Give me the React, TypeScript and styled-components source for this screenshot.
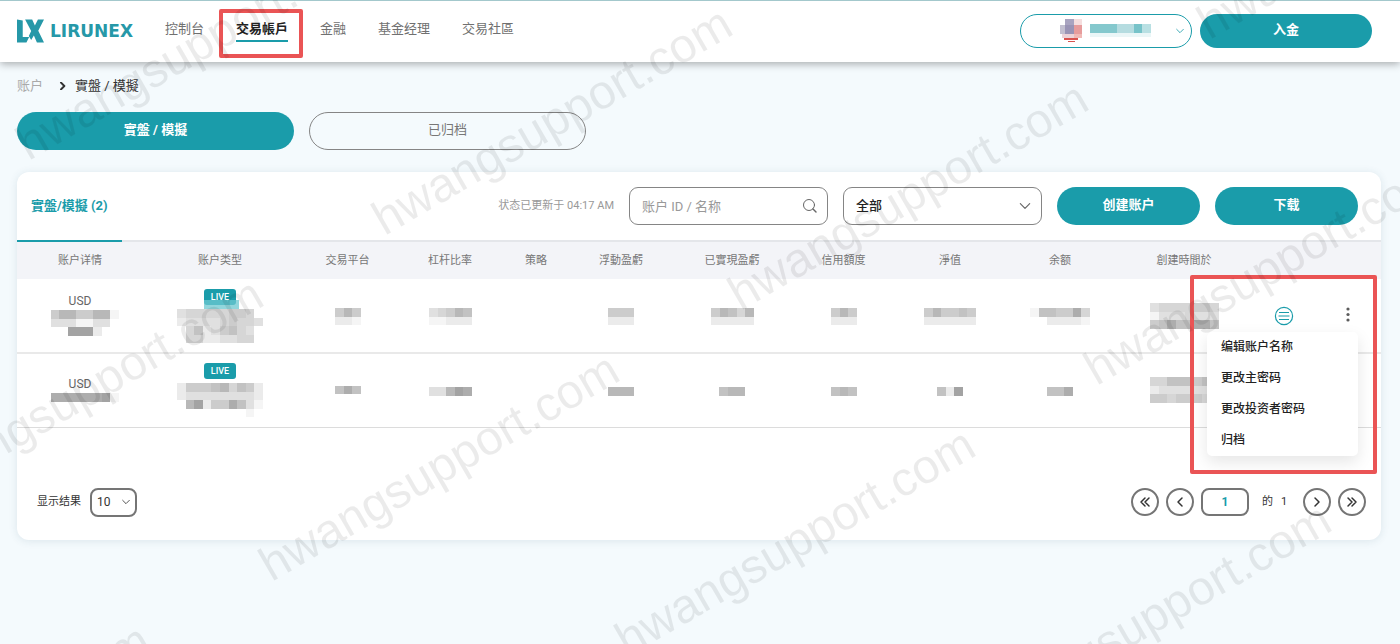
import React from "react";
import styled, { createGlobalStyle, css } from "styled-components";

const teal = "#1a9caa";
const grey = "#757575";
const alertRed = "#ea5455";

const GlobalStyle = createGlobalStyle`
  * { box-sizing: border-box; }
  body {
    margin: 0;
    background: #f4fafd;
    color: #333;
    font-family: Roboto, "Noto Sans CJK SC", sans-serif;
    font-size: 13px;
    line-height: 18px;
  }
  button, input, select { font: inherit; color: inherit; margin: 0; }
  button { cursor: pointer; }
`;

const Page = styled.div`
  position: relative;
  min-height: 100vh;
  overflow: hidden;
`;

const Header = styled.header`
  display: flex;
  align-items: center;
  height: 62px;
  padding: 0 28px 2px 17px;
  border-top: 1px solid #a3c8cc;
  background: #fff;
  box-shadow: 0 2px 8px rgba(0, 0, 0, 0.32);
`;

const Logo = styled.a`
  display: flex;
  align-items: center;
  gap: 6px;
  width: 148px;
  color: #2698a8;
  font: bold 17px/24px "DejaVu Sans", sans-serif;
  text-decoration: none;
`;

const Nav = styled.nav`
  display: flex;
  flex: 1;
  gap: 32px;
`;

const NavLink = styled.a<{ $active?: boolean }>`
  position: relative;
  height: 23px;
  padding-top: 1px;
  color: ${(p) => (p.$active ? "#222" : "#707070")};
  font-weight: ${(p) => (p.$active ? 700 : 400)};
  border-bottom: 2px solid ${(p) => (p.$active ? teal : "transparent")};
  text-decoration: none;
`;

const Highlight = styled.span`
  position: absolute;
  z-index: 3;
  border: 4px solid ${alertRed};
  border-radius: 2px;
  pointer-events: none;
`;

const NavHighlight = styled(Highlight)`
  inset: -10px -15px -18px -17px;
`;

const MenuHighlight = styled(Highlight)`
  top: -25px;
  right: -19px;
  width: 187px;
  height: 199px;
`;

const HeaderActions = styled.div`
  display: flex;
  gap: 8px;
`;

const PillButton = styled.button<{ $width: number; $height: number; $outline?: string }>`
  display: flex;
  align-items: center;
  justify-content: center;
  width: ${(p) => p.$width}px;
  height: ${(p) => p.$height}px;
  padding: 0 0 2px;
  border: ${(p) => (p.$outline ? `1px solid ${p.$outline}` : "0")};
  border-radius: 19px;
  background: ${(p) => (p.$outline ? "transparent" : teal)};
  color: ${(p) => (p.$outline ? "#777" : "#fff")};
  font-weight: ${(p) => (p.$outline ? 400 : 700)};
`;

const AccountButton = styled(PillButton)`
  justify-content: flex-end;
  gap: 8px;
  padding: 0 6px 0 0;
  color: ${teal};
  svg:last-child { margin-left: 16px; }
`;

const Main = styled.main`
  padding: 15px 19px 24px 17px;
`;

const Breadcrumb = styled.nav`
  display: flex;
  align-items: center;
  height: 18px;
  margin-bottom: 17px;
  a { color: #aaa; text-decoration: none; }
  svg { margin: 0 8px 0 16px; }
`;

const ViewTabs = styled.div`
  display: flex;
  gap: 15px;
  margin-bottom: 22px;
`;

const Card = styled.section`
  border-radius: 12px;
  background: #fff;
  box-shadow: 0 1px 8px rgba(40, 80, 110, 0.12);
`;

const Toolbar = styled.div`
  display: flex;
  align-items: center;
  gap: 15px;
  height: 70px;
  padding-right: 23px;
  border-bottom: 2px solid #e4e6ea;
`;

const ListTab = styled.h2`
  align-self: stretch;
  display: flex;
  align-items: center;
  width: 105px;
  margin: 0 auto -2px 0;
  padding-left: 14px;
  border-bottom: 2px solid ${teal};
  color: ${teal};
  font-size: 13px;
  font-weight: 700;
  white-space: nowrap;
`;

const Status = styled.span`
  color: #999;
  font-size: 11px;
`;

const Field = styled.label`
  position: relative;
  display: block;
  color: #666;
  svg { position: absolute; right: 10px; top: 50%; transform: translateY(-50%); pointer-events: none; }
`;

const fieldBox = css`
  display: block;
  width: 199px;
  height: 38px;
  padding: 0 12px;
  border: 1px solid #858585;
  border-radius: 9px;
  background: #fff;
  outline: 0;
  appearance: none;
`;

const SearchInput = styled.input`
  ${fieldBox}
  &::placeholder { color: #999; opacity: 1; }
`;

const FilterSelect = styled.select`
  ${fieldBox}
  color: #222;
  font-weight: 500;
`;

const Table = styled.table`
  width: 100%;
  table-layout: fixed;
  border-collapse: collapse;
  text-align: center;
`;

const HeadCell = styled.th`
  height: 37px;
  padding: 0;
  background: #f3f4f8;
  color: #777;
  font-size: 11px;
  font-weight: 400;
`;

const Row = styled.tr`
  border-bottom: 1px solid #dcdcdc;
  &:first-child { border-bottom: 2px solid #e9e9e9; }
`;

const Cell = styled.td`
  height: 74px;
  padding: 0;
  color: #666;
  font-size: 12px;
`;

const Stack = styled.div<{ $gap?: number; $bottom?: number }>`
  display: flex;
  flex-direction: column;
  align-items: center;
  gap: ${(p) => p.$gap ?? 0}px;
  padding-bottom: ${(p) => p.$bottom ?? 0}px;
`;

const LiveBadge = styled.span<{ $covered?: boolean }>`
  position: relative;
  width: 32px;
  height: 16px;
  border-radius: 3px;
  background: ${teal};
  color: #fff;
  font-size: 9px;
  font-weight: 500;
  line-height: 17px;
  ${(p) =>
    p.$covered &&
    css`
      &::after {
        content: "";
        position: absolute;
        left: 0;
        top: 11px;
        width: 35px;
        height: 9px;
        background: rgba(110, 200, 208, 0.75);
      }
    `}
`;

const IconButton = styled.button`
  display: inline-flex;
  align-items: center;
  justify-content: center;
  width: 20px;
  height: 32px;
  padding: 0;
  border: 0;
  background: none;
  vertical-align: middle;
`;

const MenuAnchor = styled.div`
  position: relative;
  display: inline-block;
  vertical-align: middle;
`;

const Menu = styled.div`
  position: absolute;
  z-index: 2;
  top: 100%;
  right: 0;
  width: 151px;
  border-radius: 5px;
  background: #fff;
  box-shadow: 0 6px 16px rgba(0, 0, 0, 0.1);
`;

const MenuItem = styled.button`
  display: block;
  width: 100%;
  height: 31px;
  padding: 0 14px;
  border: 0;
  background: none;
  color: #222;
  font-size: 12px;
  font-weight: 500;
  text-align: left;
`;

const Footer = styled.footer`
  display: flex;
  align-items: center;
  justify-content: space-between;
  padding: 60px 15px 23px 20px;
  font-size: 11px;
`;

const PageSize = styled.label`
  position: relative;
  display: flex;
  align-items: center;
  gap: 9px;
  svg { position: absolute; right: 6px; pointer-events: none; }
`;

const SizeSelect = styled.select`
  width: 47px;
  height: 29px;
  padding: 0 5px;
  border: 2px solid ${grey};
  border-radius: 8px;
  background: #fff;
  font-size: 12px;
  appearance: none;
`;

const Pager = styled.div`
  display: flex;
  align-items: center;
  gap: 7px;
`;

const PageButton = styled.button`
  display: flex;
  align-items: center;
  justify-content: center;
  width: 28px;
  height: 28px;
  padding: 0;
  border: 2px solid ${grey};
  border-radius: 50%;
  background: #fff;
  color: #333;
`;

const PageInput = styled.input`
  width: 48px;
  height: 28px;
  padding: 0;
  border: 2px solid ${grey};
  border-radius: 8px;
  background: #fff;
  color: ${teal};
  font-size: 12px;
  font-weight: 700;
  text-align: center;
`;

const PageCount = styled.span`
  display: flex;
  gap: 8px;
  width: 34px;
  margin-left: 6px;
`;

const WatermarkLayer = styled.div`
  position: absolute;
  inset: 0;
  z-index: 4;
  overflow: hidden;
  pointer-events: none;
`;

const Watermark = styled.span<{ $x: number; $y: number }>`
  position: absolute;
  left: ${(p) => p.$x}px;
  top: ${(p) => p.$y - 49}px;
  color: rgba(0, 0, 0, 0.08);
  font: 48px/64px "Liberation Sans", Arial, sans-serif;
  white-space: nowrap;
  transform: rotate(-30deg);
  transform-origin: 0 49px;
`;

/* Each digit is the darkness of one pixelated block; a dot leaves it empty. */
function Mosaic({ rows }: { rows: string[] }) {
  const cols = Math.max(...rows.map((r) => r.length));
  return (
    <svg
      width={Math.round(cols * 8.6)}
      height={Math.round(rows.length * 8.6)}
      viewBox={`0 0 ${cols} ${rows.length}`}
      preserveAspectRatio="none"
      shapeRendering="crispEdges"
      style={{ verticalAlign: "middle" }}
      aria-hidden
    >
      {rows.flatMap((row, y) =>
        [...row].map((c, x) =>
          c === "." ? null : (
            <rect key={`${x}-${y}`} x={x} y={y} width={1} height={1} fillOpacity={Number(c) * 0.04} />
          )
        )
      )}
    </svg>
  );
}

function Chevron({ size = 12, d = "M2 4l4 4 4-4", width = 1 }: { size?: number; d?: string; width?: number }) {
  return (
    <svg width={size} height={size} viewBox="0 0 12 12" fill="none" stroke="currentColor" strokeWidth={width} strokeLinecap="round" strokeLinejoin="round" aria-hidden>
      <path d={d} />
    </svg>
  );
}

const columns: [string, number][] = [
  ["账户详情", 126],
  ["账户类型", 154],
  ["交易平台", 101],
  ["杠杆比率", 104],
  ["策略", 68],
  ["浮動盈虧", 102],
  ["已實現盈虧", 120],
  ["信用額度", 103],
  ["淨值", 110],
  ["余额", 110],
  ["創建時間於", 138],
  ["", 62],
  ["", 66],
];

const accounts = [
  {
    id: [".57755771", ".3331133.", "...9992.."],
    type: ["344444554.", "2333345443", ".46235643.", ".44223344."],
    values: [
      ["575", "221"],
      ["34576", "11222"],
      [],
      ["555", "222"],
      ["57647", "22222"],
      ["575", "222"],
      ["575565", "222222"],
      ["1665584", "..22221"],
      ["34444554", "13334333", "56866886"],
    ],
    menu: true,
  },
  {
    id: [".88888891"],
    type: ["2555674652", "2333333332", ".792558631", "........1."],
    values: [
      ["...", "686", "..."],
      ["33798"],
      [],
      ["777"],
      ["677"],
      ["676"],
      ["629"],
      ["668"],
      ["44666567", "23333333", "55455543"],
    ],
    menu: false,
  },
];

const navItems = ["控制台", "交易帳戶", "金融", "基金经理", "交易社區"];
const menuItems = ["编辑账户名称", "更改主密码", "更改投资者密码", "归档"];
const watermarks = [
  [29, 162], [385, 237], [741, 312], [1097, 387], [1210, 41],
  [-84, 508], [272, 583], [628, 658], [984, 733], [-197, 854],
];

export default function App() {
  return (
    <Page>
      <GlobalStyle />
      <Header>
        <Logo href="#">
          <svg width="27" height="24" viewBox="0 0 80 70" fill="currentColor" aria-hidden>
            <path d="M0 1L17 4V53H36L28 69H0Z" />
            <path d="M24 1H45L53 19L62 1H80L63 34L80 69H59L50 48L42 62L35 50L42 35Z" />
          </svg>
          LIRUNEX
        </Logo>
        <Nav>
          {navItems.map((label, i) => (
            <NavLink key={label} href="#" $active={i === 1}>
              {label}
              {i === 1 && <NavHighlight />}
            </NavLink>
          ))}
        </Nav>
        <HeaderActions>
          <AccountButton $width={172} $height={34} $outline={teal} aria-label="account">
            <svg width="23" height="24" viewBox="0 0 23 24" shapeRendering="crispEdges" aria-hidden>
              <path fill="#c3c0d0" d="M1 6h5v9H1z" />
              <path fill="#a9a4c0" d="M6 0h9v6H6z" />
              <path fill="#9a94b5" d="M6 6h9v9H6z" />
              <path fill="#f5dede" d="M15 0h8v6h-8z" />
              <path fill="#e79c9c" d="M15 6h8v9h-8z" />
              <path fill="#ecd3d8" d="M3 15h12v4H3z" />
              <path fill="#f0b9b6" d="M15 15h8v4h-8z" />
              <path fill="#d9534f" d="M5 19h14v2H5zM9 22h7v1H9z" />
            </svg>
            <svg width="61" height="14" viewBox="0 0 61 14" shapeRendering="crispEdges" aria-hidden>
              <path fill="#84c8cd" d="M0 0h27v9H0z" />
              <path fill="#b5dce0" d="M27 0h17v9H27z" />
              <path fill="#77c3c9" d="M44 0h8v9h-8z" />
              <path fill="#b9e0e3" d="M52 0h9v9h-9z" />
              <path fill="#eaf6f7" d="M0 9h61v4H0z" />
            </svg>
            <Chevron size={10} />
          </AccountButton>
          <PillButton $width={172} $height={34}>入金</PillButton>
        </HeaderActions>
      </Header>

      <Main>
        <Breadcrumb>
          <a href="#">账户</a>
          <Chevron size={8} d="M3 1l5 5-5 5" width={3} />
          <span>實盤 / 模擬</span>
        </Breadcrumb>
        <ViewTabs>
          <PillButton $width={277} $height={38}>實盤 / 模擬</PillButton>
          <PillButton $width={277} $height={38} $outline="#858585">已归档</PillButton>
        </ViewTabs>

        <Card>
          <Toolbar>
            <ListTab>實盤/模擬 (2)</ListTab>
            <Status>状态已更新于 04:17 AM</Status>
            <Field>
              <SearchInput type="text" placeholder="账户 ID / 名称" aria-label="账户 ID / 名称" />
              <svg width="16" height="16" viewBox="0 0 16 16" fill="none" stroke="#666" strokeLinecap="round" aria-hidden>
                <circle cx="7" cy="7" r="5.5" />
                <path d="M11 11l3 3" strokeWidth="1.4" />
              </svg>
            </Field>
            <Field>
              <FilterSelect aria-label="筛选">
                <option>全部</option>
              </FilterSelect>
              <Chevron size={14} />
            </Field>
            <PillButton $width={143} $height={38}>创建账户</PillButton>
            <PillButton $width={143} $height={38}>下载</PillButton>
          </Toolbar>

          <Table>
            <colgroup>
              {columns.map(([, width], i) => (
                <col key={i} style={{ width }} />
              ))}
            </colgroup>
            <thead>
              <tr>
                {columns.map(([label], i) => (
                  <HeadCell key={i} scope="col">{label}</HeadCell>
                ))}
              </tr>
            </thead>
            <tbody>
              {accounts.map((account, n) => (
                <Row key={n}>
                  <Cell>
                    <Stack $bottom={4}>
                      USD
                      <Mosaic rows={account.id} />
                    </Stack>
                  </Cell>
                  <Cell>
                    <Stack $gap={4}>
                      <LiveBadge $covered={n === 0}>LIVE</LiveBadge>
                      <Mosaic rows={account.type} />
                    </Stack>
                  </Cell>
                  {account.values.map((rows, i) => (
                    <Cell key={i}>{rows.length > 0 && <Mosaic rows={rows} />}</Cell>
                  ))}
                  <Cell>
                    {account.menu && (
                      <IconButton aria-label="details">
                        <svg width="20" height="20" viewBox="0 0 20 20" fill="none" stroke={teal} strokeWidth="1.2" aria-hidden>
                          <circle cx="10" cy="10" r="8.6" />
                          <path d="M5 6.500h10M4.500 10h11M5 13.500h10" />
                        </svg>
                      </IconButton>
                    )}
                  </Cell>
                  <Cell>
                    {account.menu && (
                      <MenuAnchor>
                        <IconButton aria-label="more">
                          <svg width="4" height="18" viewBox="0 0 4 18" fill="#5c5c5c" aria-hidden>
                            <circle cx="2" cy="2" r="1.600" />
                            <circle cx="2" cy="7.500" r="1.600" />
                            <circle cx="2" cy="13" r="1.600" />
                          </svg>
                        </IconButton>
                        <Menu>
                          {menuItems.map((label) => (
                            <MenuItem key={label}>{label}</MenuItem>
                          ))}
                        </Menu>
                        <MenuHighlight />
                      </MenuAnchor>
                    )}
                  </Cell>
                </Row>
              ))}
            </tbody>
          </Table>

          <Footer>
            <PageSize>
              显示结果
              <SizeSelect>
                <option>10</option>
              </SizeSelect>
              <Chevron size={10} />
            </PageSize>
            <Pager>
              <PageButton aria-label="first page"><Chevron d="M6 2L2 6l4 4M10 2L6 6l4 4" width={1.5} /></PageButton>
              <PageButton aria-label="previous page"><Chevron d="M8 2L4 6l4 4" width={1.5} /></PageButton>
              <PageInput type="text" defaultValue="1" aria-label="page" />
              <PageCount>
                <span>的</span>
                <span>1</span>
              </PageCount>
              <PageButton aria-label="next page"><Chevron d="M4 2l4 4-4 4" width={1.5} /></PageButton>
              <PageButton aria-label="last page"><Chevron d="M2 2l4 4-4 4M6 2l4 4-4 4" width={1.5} /></PageButton>
            </Pager>
          </Footer>
        </Card>
      </Main>

      <WatermarkLayer aria-hidden>
        {watermarks.map(([x, y]) => (
          <Watermark key={`${x},${y}`} $x={x} $y={y}>hwangsupport.com</Watermark>
        ))}
      </WatermarkLayer>
    </Page>
  );
}
